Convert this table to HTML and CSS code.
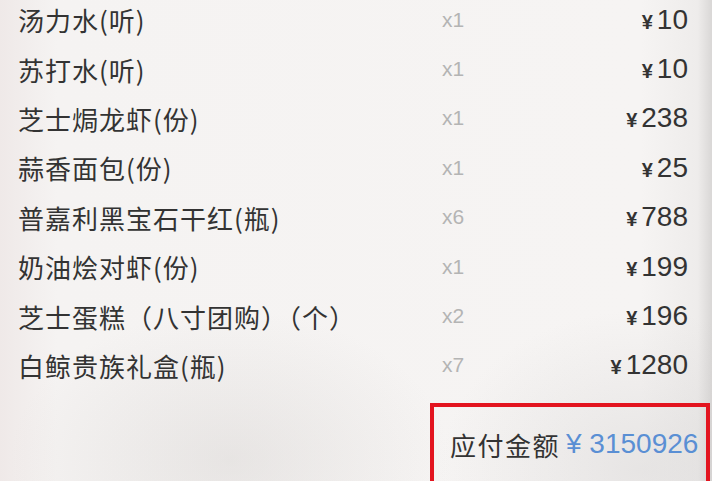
FILE: index.html
```html
<!DOCTYPE html>
<html lang="zh-CN">
<head>
    <meta charset="UTF-8">
    <meta name="viewport" content="width=device-width, initial-scale=1.0">
    <title>订单明细</title>
    <link rel="stylesheet" href="styles.css">
</head>
<body>

    <div class="order-sheet">
        <ul class="item-list">
            <li class="item-row">
                <span class="item-name">汤力水(听)</span>
                <span class="item-qty">x1</span>
                <span class="item-price"><span class="yen">¥</span>10</span>
            </li>
            <li class="item-row">
                <span class="item-name">苏打水(听)</span>
                <span class="item-qty">x1</span>
                <span class="item-price"><span class="yen">¥</span>10</span>
            </li>
            <li class="item-row">
                <span class="item-name">芝士焗龙虾(份)</span>
                <span class="item-qty">x1</span>
                <span class="item-price"><span class="yen">¥</span>238</span>
            </li>
            <li class="item-row">
                <span class="item-name">蒜香面包(份)</span>
                <span class="item-qty">x1</span>
                <span class="item-price"><span class="yen">¥</span>25</span>
            </li>
            <li class="item-row">
                <span class="item-name">普嘉利黑宝石干红(瓶)</span>
                <span class="item-qty">x6</span>
                <span class="item-price"><span class="yen">¥</span>788</span>
            </li>
            <li class="item-row">
                <span class="item-name">奶油烩对虾(份)</span>
                <span class="item-qty">x1</span>
                <span class="item-price"><span class="yen">¥</span>199</span>
            </li>
            <li class="item-row">
                <span class="item-name">芝士蛋糕（八寸团购）（个）</span>
                <span class="item-qty">x2</span>
                <span class="item-price"><span class="yen">¥</span>196</span>
            </li>
            <li class="item-row">
                <span class="item-name">白鲸贵族礼盒(瓶)</span>
                <span class="item-qty">x7</span>
                <span class="item-price"><span class="yen">¥</span>1280</span>
            </li>
        </ul>

        <div class="total-box">
            <span class="total-label">应付金额</span>
            <span class="total-amount">¥ 3150926</span>
        </div>
    </div>

</body>
</html>
```

FILE: styles.css
```css
body {
    margin: 0;
    padding: 0;
    width: 712px;
    height: 481px;
    overflow: hidden;
    font-family: 'Liberation Sans', 'Noto Sans CJK SC', sans-serif;
    color: #2f2f2f;
    background:
        radial-gradient(ellipse 220px 150px at 230px 460px, rgba(205, 201, 199, 0.35), transparent),
        radial-gradient(ellipse 200px 160px at 640px 470px, rgba(195, 193, 193, 0.3), transparent),
        linear-gradient(90deg, #efe9e8 0%, #f5f3f2 8%, #f6f4f3 90%, #eeeceb 98%, #d9d7d6 100%);
}

.order-sheet {
    display: flex;
    flex-direction: column;
}

.item-list {
    list-style: none;
    margin: -5px 0 0;
    padding: 0 24px 0 18px;
}

.item-row {
    display: grid;
    grid-template-columns: 424px 60px 1fr;
    align-items: center;
    height: 49.4px;
}

.item-name {
    font-family: 'Noto Sans CJK SC', sans-serif;
    font-size: 26px;
    letter-spacing: 1px;
    color: #333;
}

.item-qty {
    font-size: 21px;
    color: #b4b4b4;
}

.item-price {
    text-align: right;
    font-size: 28px;
    color: #333;
}

.yen {
    font-size: 20px;
    font-weight: bold;
    margin-right: 4px;
}

.total-box {
    align-self: flex-end;
    margin: 13px 2px 0 0;
    width: 256px;
    height: 74px;
    border: 4px solid #e3141f;
    padding-left: 16px;
    display: flex;
    align-items: center;
    gap: 6px;
}

.total-label {
    font-family: 'Noto Sans CJK SC', sans-serif;
    font-size: 26px;
    letter-spacing: 1.5px;
    color: #333;
}

.total-amount {
    font-size: 28px;
    color: #5a8fd4;
    white-space: nowrap;
}
```
